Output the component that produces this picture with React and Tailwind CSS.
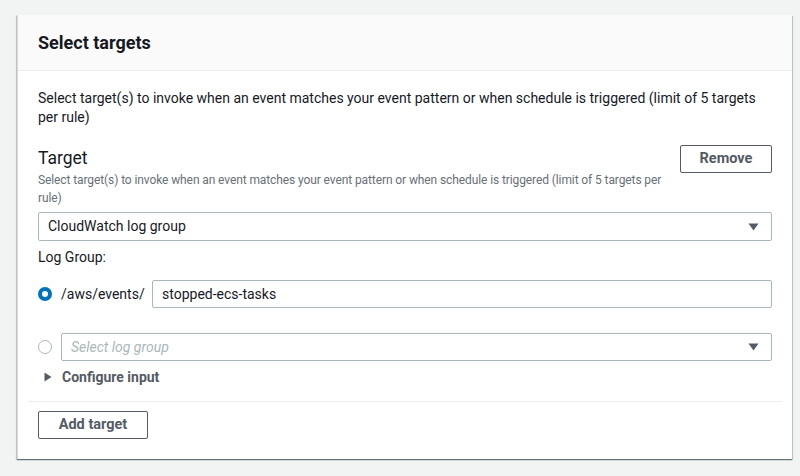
import React from 'react';

const font = { fontFamily: 'Roboto, "Liberation Sans", Arial, sans-serif' };

function Caret() {
  return (
    <svg width="11" height="8" viewBox="0 0 11 8" className="shrink-0">
      <path d="M0.5 0.5 H10.5 L5.5 7.5 Z" fill="#545b64" />
    </svg>
  );
}

function Radio({ checked }) {
  if (checked) {
    return (
      <span className="w-[14px] h-[14px] rounded-full bg-[#0073bb] flex items-center justify-center shrink-0">
        <span className="w-[6px] h-[6px] rounded-full bg-white" />
      </span>
    );
  }
  return <span className="w-[14px] h-[14px] rounded-full border border-[#aab7b8] bg-white shrink-0" />;
}

export default function App() {
  return (
    <div className="min-h-[476px] bg-[#f2f3f3] pt-[15px] pl-[17px] pr-[8px] pb-[16px] text-[#16191f]" style={font}>
      <div className="bg-white border-l border-[#d5dbdb] shadow-[0_1px_1px_0_rgba(0,28,36,0.45),1px_1px_1px_0_rgba(0,28,36,0.15),-1px_1px_1px_0_rgba(0,28,36,0.15)]">
        <div className="bg-[#fafafa] border-b border-[#eaeded] px-[20px] pt-[17px] pb-[16px]">
          <h2 className="text-[18px] leading-[22px] font-bold">Select targets</h2>
        </div>

        <div className="pt-[18px] px-[10px] pb-[20px]">
          <p className="px-[10px] text-[14px] leading-[19px]">
            Select target(s) to invoke when an event matches your event pattern or when schedule is triggered (limit of 5 targets per rule)
          </p>

          <div className="px-[10px] mt-[18px]">
            <div className="flex items-start gap-[6px]">
              <div className="flex-1">
                <div className="text-[17.5px] leading-[26px]">Target</div>
                <div className="text-[12px] leading-[18px] text-[#687078] tracking-[-0.1px]">
                  Select target(s) to invoke when an event matches your event pattern or when schedule is triggered (limit of 5 targets per rule)
                </div>
              </div>
              <button className="w-[92px] h-[28px] border border-[#545b64] rounded-[2px] text-[14.5px] font-bold text-[#545b64] bg-white">
                Remove
              </button>
            </div>

            <div className="mt-[5px] h-[29px] border border-[#aab7b8] rounded-[2px] flex items-center justify-between pl-[9px] pr-[12px] text-[14px]">
              <span>CloudWatch log group</span>
              <Caret />
            </div>

            <div className="mt-[6px] text-[14px] leading-[20px]">Log Group:</div>

            <div className="mt-[13px] flex items-center">
              <Radio checked />
              <span className="ml-[9px] text-[14px] w-[91px]">/aws/events/</span>
              <div className="flex-1 h-[28px] border border-[#aab7b8] rounded-[2px] flex items-center px-[9px] text-[14px]">
                stopped-ecs-tasks
              </div>
            </div>

            <div className="mt-[25px] flex items-center">
              <Radio />
              <div className="ml-[9px] flex-1 h-[28px] border border-[#aab7b8] rounded-[2px] flex items-center justify-between pl-[9px] pr-[12px] text-[14px]">
                <span className="italic text-[#aab7b8]">Select log group</span>
                <Caret />
              </div>
            </div>

            <div className="mt-[6px] flex items-center h-[20px] pl-[6px]">
              <svg width="8" height="10" viewBox="0 0 8 10">
                <path d="M0.5 0.5 L7.5 5 L0.5 9.5 Z" fill="#545b64" />
              </svg>
              <span className="ml-[10px] text-[14px] font-bold text-[#545b64]">Configure input</span>
            </div>
          </div>

          <div className="mt-[14px] border-t border-[#eaeded]" />

          <div className="px-[10px] mt-[9px]">
            <button className="w-[110px] h-[28px] border border-[#545b64] rounded-[2px] text-[14.5px] font-bold text-[#545b64] bg-white">
              Add target
            </button>
          </div>
        </div>
      </div>
    </div>
  );
}
